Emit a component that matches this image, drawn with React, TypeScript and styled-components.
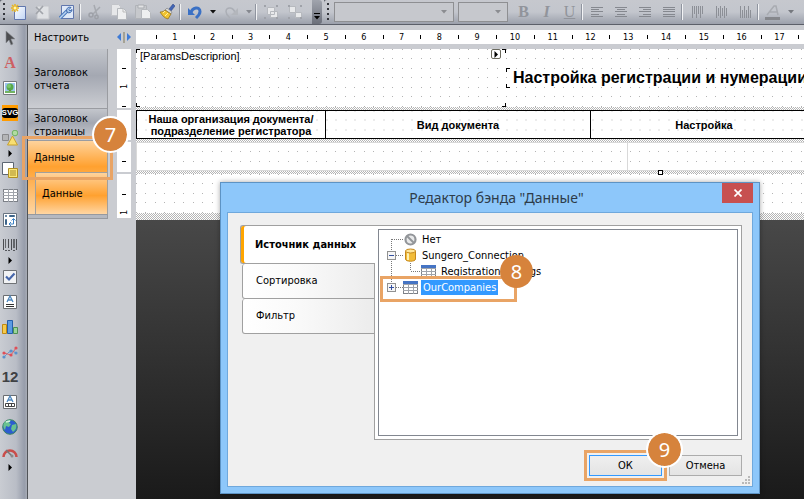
import React from "react";
import styled, { createGlobalStyle, css } from "styled-components";

const ui = `"DejaVu Sans Condensed", "Noto Sans", sans-serif`;
const reportFont = `"Liberation Sans", Arial, sans-serif`;

const GlobalStyle = createGlobalStyle`
  * { box-sizing: border-box; }
  html, body, #root { height: 100%; }
  body { margin: 0; overflow: hidden; font-family: ${ui}; font-size: 11px; color: #000; }
  button, select { font: inherit; color: inherit; }
  svg { display: block; }
`;

const Shell = styled.div`
  display: flex;
  flex-direction: column;
  height: 100vh;
  background: #caccd1;
  overflow: hidden;
`;

/* ---------- top toolbars ---------- */
const TopBar = styled.header`
  display: flex;
  flex: none;
  height: 25px;
  background: #5b5f69;
`;
const Toolbar = styled.div<{ $grow?: boolean }>`
  display: flex;
  align-items: center;
  flex: ${(p) => (p.$grow ? "1" : "none")};
  min-width: 0;
  overflow: hidden;
  height: 24px;
  background: linear-gradient(#c6c8ce 0, #c3c6cd 50%, #9ba0ab 100%);
  border-radius: 3px 0 0 0;
`;
const Grip = styled.div<{ $wide?: boolean }>`
  flex: none;
  width: ${(p) => (p.$wide ? 10 : 7)}px;
  height: 18px;
  padding-left: 3px;
  &::before {
    content: "";
    display: block;
    width: 2px;
    height: 18px;
    background: repeating-linear-gradient(#34363c 0 2px, transparent 2px 5px);
  }
`;
const ToolButton = styled.button<{ $w?: number }>`
  flex: none;
  display: grid;
  place-items: center;
  width: ${(p) => p.$w ?? 24}px;
  height: 24px;
  padding: 0;
  border: 0;
  background: none;
`;
const Separator = styled.div`
  flex: none;
  width: 4px;
  height: 16px;
  border-left: 1px solid #8f949f;
  &::before {
    content: "";
    display: block;
    width: 1px;
    height: 16px;
    background: #f2f3f5;
  }
`;
const EndCap = styled.button`
  display: grid;
  place-items: end center;
  flex: none;
  width: 10px;
  height: 24px;
  margin: 0 2px 0 5px;
  padding: 0 0 4px;
  border: 0;
  border-radius: 0 3px 3px 0;
  background: linear-gradient(#a0a4ad, #6c707b);
`;
const Combo = styled.label<{ $w: number; $gap?: number }>`
  flex: none;
  display: grid;
  grid-template-columns: 1fr 12px;
  align-items: center;
  width: ${(p) => p.$w}px;
  height: 20px;
  margin-right: ${(p) => p.$gap ?? 0}px;
  border: 1px solid #8e8f92;
  background: #c6c8cd;
  select {
    grid-area: 1 / 1 / 2 / 3;
    appearance: none;
    width: 100%;
    height: 18px;
    border: 0;
    background: transparent;
  }
  svg { grid-area: 1 / 2; }
`;
const Letter = styled.span<{ $kind: string }>`
  font-family: "Liberation Serif", serif;
  font-size: 16px;
  line-height: 16px;
  color: #91949b;
  ${(p) => p.$kind === "b" && css`font-weight: bold;`}
  ${(p) => p.$kind === "i" && css`font-style: italic; font-weight: bold;`}
  ${(p) => p.$kind === "u" && css`text-decoration: underline;`}
`;

/* ---------- body ---------- */
const Body = styled.div`
  display: flex;
  flex: 1;
  min-height: 0;
`;
const ToolStrip = styled.nav`
  display: flex;
  flex-direction: column;
  flex: none;
  width: 28px;
  padding-right: 7px;
  border-right: 1px solid #505358;
  background: linear-gradient(90deg, #c9ccd2 0, #b9bdc6 60%, #979dab 90%, #a7abb5 100%);
  overflow: hidden;
`;
const StripButton = styled.button<{ $small?: boolean }>`
  flex: none;
  display: grid;
  place-items: center;
  width: 20px;
  height: ${(p) => (p.$small ? 7 : 25)}px;
  padding: 0;
  border: 0;
  background: none;
`;
const Designer = styled.main`
  display: flex;
  flex-direction: column;
  position: relative;
  flex: 1;
  min-width: 0;
`;
const HeadRow = styled.div`
  display: flex;
  align-items: center;
  flex: none;
  height: 24px;
`;
const Configure = styled.button`
  width: 89px;
  padding: 0 0 0 6px;
  border: 0;
  background: none;
  text-align: left;
`;
const Splitter = styled.div`
  width: 19px;
  flex: none;
`;
const Ruler = styled.div`
  display: flex;
  flex: 1;
  min-width: 0;
  height: 14px;
  padding-left: 20px;
  background: #fff;
  overflow: hidden;
`;
const RulerCell = styled.div`
  flex: none;
  width: 1cm;
  height: 14px;
  font-size: 9px;
  line-height: 14px;
  text-align: center;
  background: linear-gradient(#000, #000) 0 5px / 1px 4px no-repeat;
`;
const WorkRow = styled.div`
  display: flex;
  flex: 1;
  min-height: 0;
`;
const BandList = styled.div`
  flex: none;
  width: 80px;
  margin-right: 9px;
`;
const BandLabel = styled.div<{ $h: number }>`
  display: flex;
  align-items: center;
  height: ${(p) => p.$h}px;
  padding-left: 6px;
  line-height: 13px;
  background: linear-gradient(#c3c6cc 0, #a4a8b2 45%, #cbcdd2 100%);
  border-right: 1px solid #9a9ca1;
  border-bottom: 1px solid #9a9ca1;
`;
const orange = "linear-gradient(#ffd39c 0, #ffa130 55%, #ffd6a3 100%)";
const DataBand = styled.div`
  padding-left: 7px;
  border-right: 1px solid #a2a09c;
  background: linear-gradient(#ffd39c 0, #ffa130 35%, #ffd6a3 100%);
`;
const DataTitle = styled.div`
  height: 31px;
  margin-left: -1px;
  line-height: 34px;
`;
const NestedBand = styled.div`
  height: 42px;
  padding-left: 6px;
  line-height: 42px;
  border: solid #a2a09c;
  border-width: 1px 0 0 1px;
  background: ${orange};
`;
const BandFoot = styled.div`
  height: 5px;
  border: 1px solid #96999f;
  border-left: 0;
  background: #b4b8c0;
`;
const VRuler = styled.div`
  flex: none;
  width: 14px;
  margin-right: 5px;
`;
const VSegment = styled.div<{ $h: number }>`
  height: ${(p) => p.$h}px;
  margin-bottom: 2px;
  background: #fff;
`;
const Canvas = styled.div`
  flex: 1;
  min-width: 0;
  overflow: hidden;
  background: linear-gradient(#484848 171px, #1a1a1a 100%);
`;
const dot = "conic-gradient(from 270deg at 1px 1px, #b4b4b4 90deg, transparent 0)";
const dots = css`
  background-color: #fff;
  background-image: ${dot}, ${dot}, ${dot}, ${dot};
  background-size: 19px 19px;
  background-position: 0 0, 9px 0, 0 9px, 9px 9px;
`;
const Band = styled.section<{ $h: number }>`
  display: flex;
  position: relative;
  height: ${(p) => p.$h}px;
  ${dots}
`;
const Hatch = styled.div<{ $h: number }>`
  height: ${(p) => p.$h}px;
  background: repeating-conic-gradient(#b5b5b5 0 25%, #fff 0 50%) 0 0 / 2px 2px;
`;
const tick = "linear-gradient(#000, #000)";
const ReportText = styled.div<{ $w: number; $h: number; $title?: boolean }>`
  flex: none;
  width: ${(p) => p.$w}px;
  height: ${(p) => p.$h}px;
  padding: 0 4px;
  white-space: nowrap;
  font-family: ${reportFont};
  font-size: 11px;
  line-height: 15px;
  background: ${tick} 0 0 / 4px 1px, ${tick} 0 0 / 1px 4px, ${tick} 100% 0 / 4px 1px,
    ${tick} 100% 0 / 1px 4px, ${tick} 0 100% / 4px 1px, ${tick} 0 100% / 1px 4px,
    ${tick} 100% 100% / 4px 1px, ${tick} 100% 100% / 1px 4px;
  background-repeat: no-repeat;
  ${(p) =>
    p.$title &&
    css`
      margin-top: 19px;
      padding: 0 7px;
      font-size: 16px;
      font-weight: bold;
      line-height: 20px;
    `}
`;
const Expand = styled.button`
  position: absolute;
  left: 355px;
  top: 0;
  display: grid;
  place-items: center;
  width: 10px;
  height: 10px;
  padding: 0;
  border: 1px solid #6b6a5e;
  border-radius: 2px;
  background: #fff;
`;
const HeadTable = styled.table`
  table-layout: fixed;
  width: 681px;
  height: 29px;
  border-collapse: collapse;
  font-family: ${reportFont};
  font-size: 11px;
  line-height: 12px;
  ${dots}
  th { padding: 0; border: 1px solid #000; }
`;
const DataCell = styled.div<{ $w: number }>`
  flex: none;
  width: ${(p) => p.$w}px;
  border: solid #d9d9d9;
  border-width: 1px 0 1px 1px;
`;
const Handle = styled.div`
  position: absolute;
  left: 522px;
  bottom: -4px;
  z-index: 1;
  width: 5px;
  height: 5px;
  border: 1px solid #000;
  background: #fff;
`;

/* ---------- dialog ---------- */
const Dialog = styled.div`
  position: absolute;
  left: 192px;
  top: 157px;
  z-index: 2;
  width: 540px;
  padding: 0 6px 6px;
  border: 1px solid #5d93c4;
  background: #8dc7fa;
  box-shadow: 0 0 5px rgba(0, 0, 0, 0.35);
`;
const TitleBar = styled.div`
  display: grid;
  grid-template-columns: 44px 1fr 31px;
  height: 29px;
  h1 {
    margin: 0;
    font: 14px/30px "Noto Sans", sans-serif;
    color: #2e3c4a;
    text-align: center;
  }
`;
const Close = styled.button`
  display: grid;
  place-items: center;
  height: 20px;
  padding: 0;
  border: 0;
  background: #c75050;
`;
const Content = styled.div`
  display: flex;
  flex-direction: column;
  padding: 12px 10px 2px 12px;
  border: 1px solid #6fa8dc;
  background: #f0f0f0;
`;
const Pages = styled.div`
  display: flex;
  height: 215px;
`;
const TabList = styled.div`
  flex: none;
  width: 135px;
  z-index: 1;
`;
const Tab = styled.button<{ $active?: boolean }>`
  display: block;
  width: 133px;
  height: 35px;
  margin-left: 2px;
  padding: 0 0 2px 13px;
  border: 1px solid #a0a0a0;
  border-top: 0;
  border-radius: 3px 0 0 3px;
  text-align: left;
  background: linear-gradient(90deg, #fff 0, #fafafa 40%, #ececec 100%);
  ${(p) =>
    p.$active &&
    css`
      width: 135px;
      height: 39px;
      margin-left: 0;
      padding: 0 0 0 14px;
      border: solid #a0a0a0;
      border-width: 1px 0 1px 1px;
      box-shadow: inset 3px 0 #ffa500;
      background: #fff;
      font-weight: bold;
    `}
`;
const Page = styled.div`
  flex: 1;
  margin-left: -1px;
  padding: 3px;
  border: 1px solid #a0a0a0;
  background: #fff;
`;
const Tree = styled.div`
  position: relative;
  height: 100%;
  padding: 1px 4px;
  border: 1px solid #828790;
`;
const Node = styled.div`
  display: flex;
  align-items: center;
  height: 16px;
`;
const NodeText = styled.span<{ $selected?: boolean }>`
  height: 15px;
  margin-left: 3px;
  padding: 0 2px;
  line-height: 15px;
  ${(p) => p.$selected && css`background: #3399ff; color: #fff;`}
`;
const Actions = styled.div`
  position: relative;
  display: flex;
  justify-content: flex-end;
  gap: 7px;
  margin-top: 15px;
`;
const DialogButton = styled.button<{ $primary?: boolean }>`
  width: 73px;
  height: 21px;
  padding: 0;
  border: 1px solid ${(p) => (p.$primary ? "#3399ff" : "#acacac")};
  background: linear-gradient(#efefef, #e4e4e4);
`;
const SizeGrip = styled.svg`
  align-self: flex-end;
  margin-right: -8px;
`;

/* ---------- callouts ---------- */
const Callout = styled.div<{ $l: number; $t: number; $w: number; $h: number }>`
  position: absolute;
  left: ${(p) => p.$l}px;
  top: ${(p) => p.$t}px;
  z-index: 3;
  width: ${(p) => p.$w}px;
  height: ${(p) => p.$h}px;
  border: 3px solid #e9a465;
  pointer-events: none;
`;
const Badge = styled.span<{ $l: number; $t: number; $ring?: boolean }>`
  position: absolute;
  left: ${(p) => p.$l}px;
  top: ${(p) => p.$t}px;
  width: 37px;
  height: 37px;
  border: 2px solid ${(p) => (p.$ring ? "#fff" : "transparent")};
  border-radius: 50%;
  background: #d6833c;
  background-clip: padding-box;
  color: #fff;
  font: 20px/33px "Noto Sans", sans-serif;
  text-align: center;
`;

/* ---------- icons ---------- */
const Svg = ({ children, w = 16, h = 16, crisp }: { children: React.ReactNode; w?: number; h?: number; crisp?: boolean }) => (
  <svg width={w} height={h} viewBox={`0 0 ${w} ${h}`} fill="none" shapeRendering={crisp ? "crispEdges" : undefined} aria-hidden="true">
    {children}
  </svg>
);
const Caret = ({ color = "#111" }: { color?: string }) => (
  <Svg w={6} h={4}><path d="M0 0h6L3 3.5z" fill={color} /></Svg>
);
const RightArrow = () => <Svg w={4} h={7}><path d="M.5 0v7L4 3.5z" fill="#000" /></Svg>;

const NewIcon = () => (
  <Svg><defs><linearGradient id="nw" x2="1" y2="1"><stop stopColor="#fff" /><stop offset="1" stopColor="#bfd4f5" /></linearGradient></defs>
    <path d="M3.500 2.500h11v13h-11z" fill="url(#nw)" stroke="#6177ad" />
    <path d="M4 0v8M0 4h8M1 1l6 6M7 1L1 7" stroke="#e9b522" strokeWidth="1.500" /><circle cx="4" cy="4" r="1.500" fill="#fff6ae" /></Svg>
);
const DeleteIcon = () => (
  <Svg><path d="M2 2h12v13H2z" fill="#dfe1e4" stroke="#c3c5ca" /><path d="M1 3l7 7M8 2L1 10" stroke="#a2a5ab" strokeWidth="1.700" /></Svg>
);
const SetupIcon = () => (
  <Svg><path d="M2.500 1.500h12v13h-12z" fill="#dfe9f8" stroke="#6177ad" />
    <path d="M1 14l7-7" stroke="#4a79bd" strokeWidth="3.500" /><path d="M1 14l7-7" stroke="#b9d3f1" strokeWidth="1.500" />
    <path d="M12 3.500L10 5.500 11 7l2-1.500a3 3 0 0 1-5 2.500c-1.500-2.500 1-6 4-4.500z" fill="#a9c7ec" stroke="#3e69ac" /></Svg>
);
const CutIcon = () => (
  <Svg><path d="M7 1l3 10M13 3L6 10" stroke="#a6a9af" strokeWidth="1.500" /><circle cx="4" cy="11" r="2" stroke="#9da0a7" strokeWidth="1.500" /><circle cx="9.500" cy="13" r="1.700" stroke="#9da0a7" strokeWidth="1.500" /></Svg>
);
const CopyIcon = () => (
  <Svg><path d="M.500.500h7l2 2v9h-9z" fill="#e6e7e9" stroke="#c2c4c9" /><path d="M6.500 4.500h6l3 3v8h-9z" fill="#eeeff0" stroke="#b5b8bd" /><path d="M12 5v3h3" stroke="#bbb" /></Svg>
);
const PasteIcon = () => (
  <Svg><path d="M.500 1.500h11v13h-11z" fill="#c6c8cc" stroke="#b0b3b8" /><path d="M3 1h6v3H3z" fill="#e2e3e5" stroke="#aaadb2" /><path d="M6.500 5.500h6l3 3v6h-9z" fill="#eeeff0" stroke="#b5b8bd" /></Svg>
);
const BrushIcon = () => (
  <Svg><path d="M14 0l2 2-4 5-2-2z" fill="#4265b5" stroke="#273c7c" strokeWidth=".5" /><path d="M8 4l5 4-1 2-6-4z" fill="#d9d9d6" stroke="#777" strokeWidth=".6" /><path d="M6 6l6 4-3 5c-4-1-6-4-8-7 3 0 4-1 5-2z" fill="#f1c331" stroke="#8c6a1c" strokeWidth=".7" /><path d="M6 7L4 9M9 9l-3 3" stroke="#fff1a0" /></Svg>
);
const UndoIcon = ({ off }: { off?: boolean }) => (
  <Svg>
    <g transform={off ? "matrix(-1 0 0 1 16 0)" : undefined}>
      <path d="M4 9C5 3 13 2 13 7.500c0 3-2 4.500-4 6.500" stroke={off ? "#abaeb5" : "#3b71c5"} strokeWidth={off ? 1.5 : 3} />
      <path d="M1 4v7h7z" fill={off ? "#b3b6bc" : "#3b71c5"} />
    </g>
  </Svg>
);
const GroupIcon = ({ split }: { split?: boolean }) => (
  <Svg><path d={split ? "M2.500 2.500h6v6h-6zM8.500 8.500h6v5h-6z" : "M4.500 3.500h7v7h-7zM7.500 7.500h7v6h-7z"} fill="#e8e9eb" stroke="#b6b9be" />
    <path d="M1 1h2v2H1zM13 1h2v2h-2zM1 13h2v2H1zM13 13h2v2h-2z" fill="#9fa2a9" /></Svg>
);
const LinesIcon = ({ kind }: { kind: string }) => {
  const x = (i: number) => (i % 2 === 0 ? 0 : kind === "r" ? 4 : kind === "c" ? 2 : 0);
  const w = (i: number) => (i % 2 === 0 || kind === "j" ? 12 : 8);
  return <Svg w={12} h={11} crisp>{[0, 1, 2, 3, 4].map((i) => <rect key={i} x={x(i)} y={i * 2 + (i > 2 ? 1 : 0)} width={w(i)} height="1" fill="#85888f" />)}</Svg>;
};
const BarsIcon = ({ kind }: { kind: string }) => (
  <Svg w={11} h={12} crisp>{[0, 1, 2, 3, 4, 5].map((i) => {
    const h = i % 2 ? 8 : 12;
    return <rect key={i} x={i * 2} y={kind === "t" ? 0 : kind === "m" ? (12 - h) / 2 : 12 - h} width="1" height={h} fill="#8c8f96" />;
  })}</Svg>
);
const FontColorIcon = () => (
  <Svg h={15}><path d="M2 10L9 1h2l2 9M5 7h7" stroke="#a8abb1" strokeWidth="1.500" /><path d="M0 12h15v3H0z" fill="#85878c" /></Svg>
);

const CursorIcon = () => <Svg><path d="M4 1v12l3-3 2 5 2-1-2-5h4z" fill="#4c4d50" stroke="#8b8e94" strokeWidth=".6" /></Svg>;
const Glyph = styled.span<{ $mono?: boolean }>`
  font: bold 16px/16px "Liberation Serif", serif;
  color: #cd6063;
  ${(p) => p.$mono && css`font: bold 15px/16px "Liberation Sans", sans-serif; color: #3f4144;`}
`;
const SvgTag = styled.span`
  display: block;
  width: 16px;
  height: 16px;
  padding: 3px 0;
  background: #ff9b00;
  span {
    display: flex;
    justify-content: center;
    border-radius: 3px;
    background: #000;
    color: #fff;
    font: bold 8px/10px "Liberation Sans", sans-serif;
  }
`;
const PictureIcon = () => <Svg><path d="M1.500 1.500h13v13h-13z" fill="#fff" stroke="#75787c" /><path d="M3 3h10v10H3z" fill="#9cc4ee" /><path d="M7 9h2v4H7z" fill="#8a6b35" /><circle cx="8" cy="7" r="3.500" fill="#58a94a" /><circle cx="7" cy="6" r="2" fill="#7cc76c" /><path d="M3 11h10v2H3z" fill="#71b463" /></Svg>;
const ShapesIcon = () => <Svg><path d="M.500 4.500h6v6h-6z" fill="#b4b5b7" stroke="#88898c" /><circle cx="13" cy="3" r="2.800" fill="#b1dca0" stroke="#6fb163" /><path d="M10.500 6l5 9h-10z" fill="#f8df72" stroke="#c9a12b" /></Svg>;
const SubIcon = () => <Svg><path d="M.500.500h11v12H.500z" fill="#fff" stroke="#5d6672" /><path d="M6.500 6.500h9v9h-9z" fill="#fbe879" stroke="#b08f24" /><path d="M8 9h6M8 11h6M8 13h6" stroke="#a88b2d" /></Svg>;
const GridIcon = ({ blue }: { blue?: boolean }) => (
  <Svg w={15} h={14} crisp><path d="M.500 1.500h14v12H.500z" fill="#fff" stroke="#7c8087" />{blue && <path d="M0 1h15v3H0z" fill="#4574c4" />}
    <path d="M5 4v10M10 4v10" stroke="#a0a4ab" /><path d="M0 4.500h15M0 7.500h15M0 10.500h15" stroke="#a0a4ab" />{!blue && <path d="M5 1v3M10 1v3" stroke="#a0a4ab" />}</Svg>
);
const CrossIcon = () => <Svg><path d="M1.500 1.500h13v13h-13z" fill="#fff" stroke="#687481" /><path d="M3.500 3.500h1v1h-1zM7.500 3.500h5v1h-5zM3.500 7.500h1v5h-1z" stroke="#3d658b" /><path d="M11.500 7v5h-4M9.500 8.500l2-2 2 2M9 10l-2 2 2 2" stroke="#3c82c5" /></Svg>;
const BarcodeIcon = () => <Svg crisp><path d="M1 2v11M6 2v9M9 2v11M14 2v11" stroke="#4b4d52" /><path d="M3 2h1v9H3zM11 2h2v9h-2z" fill="#63666b" /><path d="M3 13h2M6 13h2M11 13h2" stroke="#55575c" /></Svg>;
const CheckIcon = () => <Svg><path d="M1.500 1.500h13v13h-13z" fill="#f1f2f4" stroke="#6f7276" /><path d="M4 7.500l3 3L12.500 4.500" stroke="#4767ab" strokeWidth="2.200" /></Svg>;
const RichIcon = ({ boxes }: { boxes?: boolean }) => <Svg><path d="M1.500 1.500h13v13h-13z" fill="#fff" stroke="#6a6d71" /><path d="M5 8l3-6 3 6M6 6h4" stroke="#4f87bd" strokeWidth="1.300" />{boxes ? <path d="M3.500 9.500h9v3h-9zM6.500 9.500v3M9.500 9.500v3" stroke="#444" /> : <path d="M4 10.500h8M4 12.500h8" stroke="#333" />}</Svg>;
const ChartIcon = () => <Svg><path d="M.500 5.500h4v9h-4z" fill="#f4cb4e" stroke="#c08a12" /><path d="M5.500 1.500h5v13h-5z" fill="#5b9be3" stroke="#2560ac" /><path d="M11.500 8.500h4v6h-4z" fill="#9bd59b" stroke="#4f9053" /></Svg>;
const SparkIcon = () => <Svg><path d="M2 13l5-5 4-1 3 2" stroke="#669bd0" /><path d="M2 9l7 2 5-7" stroke="#d9626b" />{[[2, 13], [9, 7], [14, 9]].map(([x, y]) => <circle key={x} cx={x} cy={y} r="1.600" fill="#5b91cc" />)}{[[2, 9], [9, 11], [14, 4]].map(([x, y]) => <circle key={x} cx={x} cy={y} r="1.600" fill="#df4f58" />)}</Svg>;
const GlobeIcon = () => <Svg><circle cx="8" cy="8" r="7.300" fill="#2d5cd0" stroke="#3e8660" /><path d="M2 4c2-3 5-3 7-3l-2 3 2 1-2 3-3-1-1 4C1 9 1 6 2 4zM10 6l4-1c1 3 0 6-3 8l-2-3z" fill="#69c290" /><path d="M4 3l4-1" stroke="#d4f2df" strokeWidth="1.500" /></Svg>;
const GaugeIcon = () => <Svg><path d="M1.500 13a6.500 6.500 0 1 1 13 0" stroke="#c94e4b" strokeWidth="2.500" /><path d="M4 6l6 6" stroke="#777" strokeWidth="1.500" /><circle cx="10" cy="12" r="1.500" fill="#888" /></Svg>;
const NoneIcon = () => <Svg w={13} h={13}><circle cx="6.500" cy="6.500" r="5" stroke="#929599" strokeWidth="2.200" fill="#e8e9ea" /><path d="M3 3l7 7" stroke="#929599" strokeWidth="2" /></Svg>;
const DbIcon = () => <Svg w={13} h={14}><path d="M1.500 3v8c0 3 10 3 10 0V3z" fill="#f2bc38" stroke="#c6881b" /><path d="M4 5v7" stroke="#fff0af" strokeWidth="2" /><ellipse cx="6.500" cy="3" rx="5" ry="2" fill="#ffe69a" stroke="#c6881b" /></Svg>;

/* dotted connector and expander box of a tree row */
const Lines = ({ w, d, box, plus, boxX = 8 }: { w: number; d: string; box?: boolean; plus?: boolean; boxX?: number }) => (
  <Svg w={w} h={16} crisp>
    <path d={d} stroke="#777" strokeDasharray="1 1" />
    {box && <><rect x={boxX - 3.5} y="4.500" width="8" height="8" fill="#f6f6f6" stroke="#919191" /><path d={`M${boxX - 2} 8.500h5${plus ? `M${boxX + 0.5} 6v5` : ""}`} stroke="#3350a0" /></>}
  </Svg>
);
const VMarks = ({ marks, one, h }: { marks: number[]; one?: number; h: number }) => (
  <Svg w={14} h={h} crisp>
    {marks.map((y) => <rect key={y} x="5" y={y} width="4" height="1" fill="#000" />)}
    {one !== undefined && <text transform={`translate(10 ${one + 3}) rotate(-90)`} fontSize="9" fill="#000">1</text>}
  </Svg>
);

const stripItems: [string, React.ReactNode][] = [
  ["Выбор", <CursorIcon />], ["Текст", <Glyph>A</Glyph>], ["Рисунок", <PictureIcon />],
  ["SVG", <SvgTag><span>SVG</span></SvgTag>], ["Фигуры", <ShapesIcon />], [">", null],
  ["Вложенный отчет", <SubIcon />], ["Таблица", <GridIcon />], ["Матрица", <CrossIcon />],
  ["Штрихкод", <BarcodeIcon />], [">", null], ["Флажок", <CheckIcon />], ["RTF", <RichIcon />],
  ["Диаграмма", <ChartIcon />], ["Спарклайн", <SparkIcon />], ["Индекс", <Glyph $mono>12</Glyph>],
  ["Ячейки", <RichIcon boxes />], ["Карта", <GlobeIcon />], ["Шкала", <GaugeIcon />], [">", null],
];

const Tool = ({ label, w, children }: { label: string; w?: number; children: React.ReactNode }) => (
  <ToolButton type="button" aria-label={label} $w={w}>{children}</ToolButton>
);

export default function App() {
  return (
    <Shell>
      <GlobalStyle />
      <TopBar>
        <Toolbar>
          <Grip />
          <Tool label="Создать"><NewIcon /></Tool>
          <Tool label="Удалить страницу"><DeleteIcon /></Tool>
          <Tool label="Параметры"><SetupIcon /></Tool>
          <Separator />
          <Tool label="Вырезать"><CutIcon /></Tool>
          <Tool label="Копировать"><CopyIcon /></Tool>
          <Tool label="Вставить"><PasteIcon /></Tool>
          <Tool label="Формат по образцу"><BrushIcon /></Tool>
          <Separator />
          <Tool label="Отменить"><UndoIcon /></Tool>
          <Tool label="Список отмены" w={12}><Caret /></Tool>
          <Tool label="Повторить"><UndoIcon off /></Tool>
          <Tool label="Список повтора" w={12}><Caret color="#85888f" /></Tool>
          <Separator />
          <Tool label="Сгруппировать"><GroupIcon /></Tool>
          <Tool label="Разгруппировать"><GroupIcon split /></Tool>
          <EndCap type="button" aria-label="Еще"><Svg w={6} h={7}><path d="M0 0h6v1H0zM0 3h6L3 6.500z" fill="#000" /></Svg></EndCap>
        </Toolbar>
        <Toolbar $grow>
          <Grip $wide />
          <Combo $w={120} $gap={4}><select aria-label="Шрифт" disabled /><Caret color="#8b8d91" /></Combo>
          <Combo $w={50} $gap={4}><select aria-label="Размер" disabled /><Caret color="#8b8d91" /></Combo>
          {["b", "i", "u"].map((k) => <Tool key={k} label={k} w={23}><Letter $kind={k}>{k.toUpperCase()}</Letter></Tool>)}
          <Separator />
          {["l", "c", "r", "j"].map((k) => <Tool key={k} label={`Выравнивание ${k}`}><LinesIcon kind={k} /></Tool>)}
          <Separator />
          {["t", "m", "b"].map((k) => <Tool key={k} label={`Вертикально ${k}`}><BarsIcon kind={k} /></Tool>)}
          <Separator />
          <Tool label="Цвет текста"><FontColorIcon /></Tool>
          <Tool label="Выбор цвета" w={12}><Caret color="#75787e" /></Tool>
        </Toolbar>
      </TopBar>

      <Body>
        <ToolStrip>
          {stripItems.map(([label, icon], i) =>
            icon ? (
              <StripButton key={i} type="button" aria-label={label}>{icon}</StripButton>
            ) : (
              <StripButton key={i} type="button" aria-label="Еще" $small><RightArrow /></StripButton>
            ),
          )}
        </ToolStrip>

        <Designer>
          <HeadRow>
            <Configure type="button">Настроить</Configure>
            <Splitter>
              <Svg w={14} h={12}><path d="M4 2v8L0 6zM10 2v8l4-4z" fill="#3f7bd6" /><path d="M6 1h2v11H6z" fill="#a5a294" /></Svg>
            </Splitter>
            <Ruler>{Array.from({ length: 17 }, (_, i) => <RulerCell key={i}>{i + 1}</RulerCell>)}<RulerCell /></Ruler>
          </HeadRow>
          <WorkRow>
            <BandList>
              <BandLabel $h={60}>Заголовок<br />отчета</BandLabel>
              <BandLabel $h={32}>Заголовок<br />страницы</BandLabel>
              <DataBand>
                <DataTitle>Данные</DataTitle>
                <NestedBand>Данные</NestedBand>
              </DataBand>
              <BandFoot />
            </BandList>
            <VRuler>
              <VSegment $h={59}><VMarks h={59} marks={[19, 57]} one={37} /></VSegment>
              <VSegment $h={30}><VMarks h={30} marks={[19]} /></VSegment>
              <VSegment $h={30}><VMarks h={30} marks={[19]} /></VSegment>
              <VSegment $h={44}><VMarks h={44} marks={[20]} one={38} /></VSegment>
            </VRuler>
            <Canvas>
              <Band $h={58}>
                <ReportText $w={370} $h={58}>[ParamsDescriprion]</ReportText>
                <ReportText $title $w={420} $h={20}>Настройка регистрации и нумерации</ReportText>
                <Expand type="button" aria-label="Развернуть"><RightArrow /></Expand>
              </Band>
              <Hatch $h={3} />
              <HeadTable>
                <colgroup><col width={189} /><col width={265} /><col width={227} /></colgroup>
                <thead><tr>
                  <th>Наша организация документа/<br />подразделение регистратора</th>
                  <th>Вид документа</th>
                  <th>Настройка</th>
                </tr></thead>
              </HeadTable>
              <Hatch $h={3} />
              <Band $h={29}>
                <DataCell $w={491} />
                <DataCell $w={700} />
                <Handle />
              </Band>
              <Hatch $h={3} />
              <Band $h={39} />
              <Hatch $h={7} />
            </Canvas>
          </WorkRow>

          <Callout $l={-6} $t={111} $w={91} $h={44}><Badge $l={67} $t={-23} $ring>7</Badge></Callout>

          <Dialog role="dialog" aria-labelledby="dlg-title">
            <TitleBar>
              <span />
              <h1 id="dlg-title">Редактор бэнда "Данные"</h1>
              <Close type="button" aria-label="Закрыть"><Svg w={8} h={8}><path d="M.500.500l7 7M7.500.500l-7 7" stroke="#fff" strokeWidth="1.700" /></Svg></Close>
            </TitleBar>
            <Content>
              <Pages>
                <TabList role="tablist">
                  <Tab type="button" role="tab" aria-selected $active>Источник данных</Tab>
                  <Tab type="button" role="tab">Сортировка</Tab>
                  <Tab type="button" role="tab">Фильтр</Tab>
                </TabList>
                <Page>
                  <Tree role="tree">
                    <Node role="treeitem"><Lines w={21} d="M8.500 8v8M8.500 8.500h11" /><NoneIcon /><NodeText>Нет</NodeText></Node>
                    <Node role="treeitem"><Lines w={21} d="M8.500 0v16M8.500 8.500h11" box /><DbIcon /><NodeText>Sungero_Connection</NodeText></Node>
                    <Node role="treeitem"><Lines w={38} d="M8.500 0v16M27.500 0v8M27.500 8.500h11" /><GridIcon blue /><NodeText>RegistrationSettings</NodeText></Node>
                    <Node role="treeitem" aria-selected><Lines w={20} d="M8.500 0v8M8.500 8.500h11" box plus /><GridIcon blue /><NodeText $selected>OurCompanies</NodeText></Node>
                    <Callout $l={1} $t={46} $w={137} $h={26}><Badge $l={115} $t={-26}>8</Badge></Callout>
                  </Tree>
                </Page>
              </Pages>
              <Actions>
                <DialogButton type="button" $primary>ОК</DialogButton>
                <DialogButton type="button">Отмена</DialogButton>
                <Callout $l={344} $t={-5} $w={83} $h={31}><Badge $l={59} $t={-22} $ring>9</Badge></Callout>
              </Actions>
              <SizeGrip width="8" height="8" viewBox="0 0 8 8" aria-hidden="true"><path d="M6 0h2v2H6zM3 3h2v2H3zM6 3h2v2H6zM0 6h2v2H0zM3 6h2v2H3zM6 6h2v2H6z" fill="#b9b9b9" /></SizeGrip>
            </Content>
          </Dialog>
        </Designer>
      </Body>
    </Shell>
  );
}
